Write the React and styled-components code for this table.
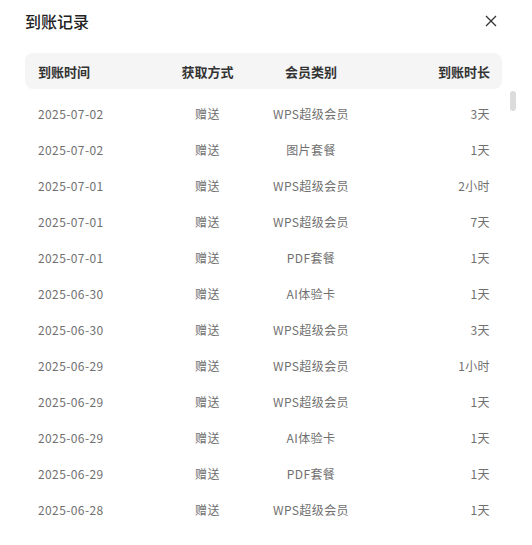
import { createGlobalStyle } from 'styled-components'
import styled from 'styled-components'

const GlobalStyle = createGlobalStyle`
  html, body {
    margin: 0;
    padding: 0;
    background: #fff;
  }
  body {
    font-family: "Noto Sans CJK SC", "Noto Sans", sans-serif;
    color: #333;
  }
`

const Dialog = styled.div`
  width: 532px;
  height: 545px;
  box-sizing: border-box;
  padding-bottom: 18px;
  display: flex;
  flex-direction: column;
  background: #fff;
  overflow: hidden;
`

const TitleBar = styled.div`
  height: 42px;
  flex: none;
  display: flex;
  align-items: center;
  justify-content: space-between;
  padding: 0 35px 0 25px;
  margin-bottom: 11px;
`

const Title = styled.h2`
  margin: 0;
  font-size: 16px;
  font-weight: 500;
  color: #222;
  line-height: 1;
`

const CloseButton = styled.button`
  width: 12px;
  height: 12px;
  padding: 0;
  border: 0;
  background: none;
  display: flex;
  cursor: pointer;
  color: #333;
`

const cols = `120px 99px 108px 1fr`

const HeadRow = styled.div`
  flex: none;
  display: grid;
  grid-template-columns: ${cols};
  align-items: center;
  height: 36px;
  margin: 0 30px 0 25px;
  padding: 0 12px 0 13px;
  background: #f5f5f5;
  border-radius: 8px;
  font-size: 13px;
  font-weight: 600;
  color: #333;
`

const ListWrap = styled.div`
  position: relative;
  flex: 1;
  min-height: 0;
  margin: 0 14px 0 25px;
`

const List = styled.div`
  height: 100%;
  overflow-y: auto;
  padding-top: 6px;
  box-sizing: border-box;
  scrollbar-width: none;

  &::-webkit-scrollbar {
    display: none;
  }
`

const Thumb = styled.div`
  position: absolute;
  top: 2px;
  right: 2px;
  width: 6px;
  height: 20px;
  border-radius: 3px;
  background: #dcdcdc;
`

const Row = styled.div`
  display: grid;
  grid-template-columns: ${cols};
  align-items: center;
  height: 36px;
  padding: 0 28px 0 13px;
  font-size: 12px;
  letter-spacing: 0.4px;
  color: #707070;
`

const Cell = styled.div`
  text-align: ${p => p.$align || 'left'};
  white-space: nowrap;
`

const records = [
  ['2025-07-02', '赠送', 'WPS超级会员', '3天'],
  ['2025-07-02', '赠送', '图片套餐', '1天'],
  ['2025-07-01', '赠送', 'WPS超级会员', '2小时'],
  ['2025-07-01', '赠送', 'WPS超级会员', '7天'],
  ['2025-07-01', '赠送', 'PDF套餐', '1天'],
  ['2025-06-30', '赠送', 'AI体验卡', '1天'],
  ['2025-06-30', '赠送', 'WPS超级会员', '3天'],
  ['2025-06-29', '赠送', 'WPS超级会员', '1小时'],
  ['2025-06-29', '赠送', 'WPS超级会员', '1天'],
  ['2025-06-29', '赠送', 'AI体验卡', '1天'],
  ['2025-06-29', '赠送', 'PDF套餐', '1天'],
  ['2025-06-28', '赠送', 'WPS超级会员', '1天'],
]

export default function App() {
  return (
    <>
      <GlobalStyle />
      <Dialog>
        <TitleBar>
          <Title>到账记录</Title>
          <CloseButton aria-label="关闭">
            <svg width="12" height="12" viewBox="0 0 12 12">
              <path d="M1 1L11 11M11 1L1 11" stroke="currentColor" strokeWidth="1.3" fill="none" />
            </svg>
          </CloseButton>
        </TitleBar>
        <HeadRow>
          <Cell>到账时间</Cell>
          <Cell $align="center">获取方式</Cell>
          <Cell $align="center">会员类别</Cell>
          <Cell $align="right">到账时长</Cell>
        </HeadRow>
        <ListWrap>
          <List>
            {records.map((r, i) => (
              <Row key={i}>
                <Cell>{r[0]}</Cell>
                <Cell $align="center">{r[1]}</Cell>
                <Cell $align="center">{r[2]}</Cell>
                <Cell $align="right">{r[3]}</Cell>
              </Row>
            ))}
          </List>
          <Thumb />
        </ListWrap>
      </Dialog>
    </>
  )
}
